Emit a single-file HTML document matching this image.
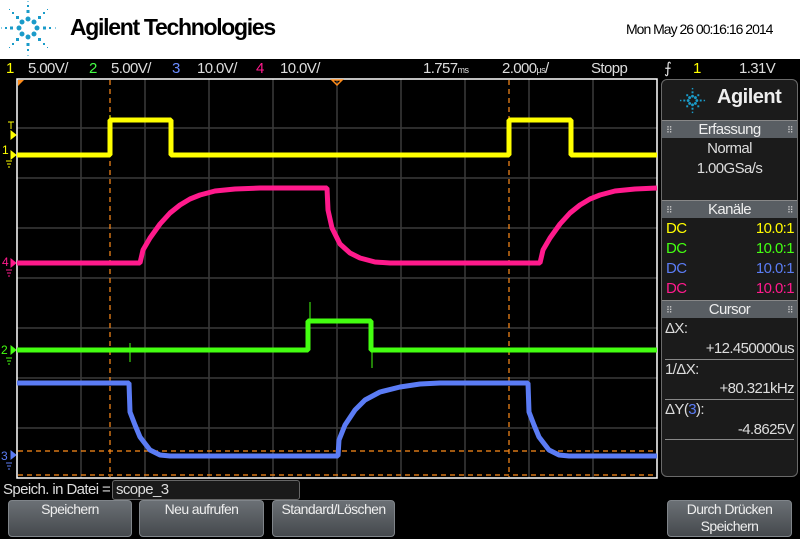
<!DOCTYPE html>
<html><head><meta charset="utf-8"><style>
*{margin:0;padding:0;box-sizing:border-box}
body{width:800px;height:539px;background:#000;position:relative;overflow:hidden;font-family:"Liberation Sans Narrow","Liberation Sans",sans-serif;color:#ddd;letter-spacing:-0.6px}
.a{position:absolute;white-space:nowrap}
#hdr{position:absolute;left:0;top:0;width:800px;height:59px;background:#fff}
.bar{font-size:15px;top:59px;line-height:19px}
.pnl{position:absolute;left:661px;top:79px;width:137px;height:398px;background:#1b1b1b;border:1px solid #6a6a6a;border-radius:6px}
.ph{position:absolute;left:0;width:135px;height:18px;background:#595e63;color:#eee;text-align:center;font-size:15px;line-height:18px;border-top:1px solid #888}
.ph:before{content:"⠿";position:absolute;left:4px;font-size:9px;color:#ccc}
.ph:after{content:"⠿";position:absolute;right:4px;font-size:9px;color:#ccc}
.btn{position:absolute;top:500px;height:37px;background:linear-gradient(#6b7075,#45494d);border:1px solid #80858a;border-radius:4px;color:#eee;font-size:14px;text-align:center;line-height:17px}
.arr{position:absolute;left:50%;bottom:3px;margin-left:-10px;width:0;height:0}
</style></head><body>
<div id="hdr"></div>
<svg class="a" style="left:0;top:0" width="58" height="58" viewBox="0 0 58 58">
<g fill="#1a9bc9">
<circle cx="28" cy="19" r="2.5"/><circle cx="28" cy="37" r="2.5"/><circle cx="19" cy="28" r="2.5"/><circle cx="37" cy="28" r="2.5"/>
<circle cx="22" cy="22" r="2.5"/><circle cx="34" cy="22" r="2.5"/><circle cx="22" cy="34" r="2.5"/><circle cx="34" cy="34" r="2.5"/>
<rect x="26.5" y="10" width="3" height="3"/><rect x="26.5" y="43" width="3" height="3"/><rect x="10" y="26.5" width="3" height="3"/><rect x="43" y="26.5" width="3" height="3"/>
<rect x="16" y="16" width="3" height="3"/><rect x="38" y="16" width="3" height="3"/><rect x="16" y="38" width="3" height="3"/><rect x="38" y="38" width="3" height="3"/>
<rect x="27" y="5" width="2" height="2"/><rect x="27" y="49" width="2" height="2"/><rect x="5" y="27" width="2" height="2"/><rect x="49" y="27" width="2" height="2"/>
<rect x="12" y="12" width="2" height="2"/><rect x="43" y="12" width="2" height="2"/><rect x="12" y="43" width="2" height="2"/><rect x="43" y="43" width="2" height="2"/>
<rect x="27.5" y="1" width="1" height="1"/><rect x="27.5" y="55" width="1" height="1"/><rect x="1" y="27.5" width="1" height="1"/><rect x="55" y="27.5" width="1" height="1"/>
<rect x="9" y="9" width="1" height="1"/><rect x="47" y="9" width="1" height="1"/><rect x="9" y="47" width="1" height="1"/><rect x="47" y="47" width="1" height="1"/>
</g></svg>
<div class="a" style="left:70px;top:14px;font-family:'Liberation Sans',sans-serif;font-weight:bold;font-size:23px;color:#000;letter-spacing:-1.3px">Agilent Technologies</div>
<div class="a" style="left:626px;top:21px;font-size:14px;color:#000;letter-spacing:-1px">Mon May 26 00:16:16 2014</div>
<div class="a bar" style="left:6px;color:#ff0">1</div>
<div class="a bar" style="left:28px">5.00V/</div>
<div class="a bar" style="left:89px;color:#4f4">2</div>
<div class="a bar" style="left:111px">5.00V/</div>
<div class="a bar" style="left:172px;color:#6b8cff">3</div>
<div class="a bar" style="left:197px">10.0V/</div>
<div class="a bar" style="left:256px;color:#ff1a8c">4</div>
<div class="a bar" style="left:280px">10.0V/</div>
<div class="a bar" style="left:423px">1.757<span style="font-size:9px">ms</span></div>
<div class="a bar" style="left:502px">2.000<span style="font-size:9px">µs</span>/</div>
<div class="a bar" style="left:591px">Stopp</div>
<div class="a bar" style="left:664px">⨍</div>
<div class="a bar" style="left:693px;color:#ff0">1</div>
<div class="a bar" style="left:739px">1.31V</div>
<svg class="a" style="left:0;top:78px" width="660" height="402" viewBox="0 78 660 402">
<g stroke="#3a3a3a" stroke-width="1.5">
<line x1="81" y1="79" x2="81" y2="478"/><line x1="145" y1="79" x2="145" y2="478"/><line x1="209" y1="79" x2="209" y2="478"/><line x1="273" y1="79" x2="273" y2="478"/><line x1="337" y1="79" x2="337" y2="478"/><line x1="401" y1="79" x2="401" y2="478"/><line x1="465" y1="79" x2="465" y2="478"/><line x1="529" y1="79" x2="529" y2="478"/><line x1="593" y1="79" x2="593" y2="478"/>
<line x1="17" y1="128" x2="657" y2="128"/><line x1="17" y1="178" x2="657" y2="178"/><line x1="17" y1="228" x2="657" y2="228"/><line x1="17" y1="278" x2="657" y2="278"/><line x1="17" y1="328" x2="657" y2="328"/><line x1="17" y1="378" x2="657" y2="378"/><line x1="17" y1="428" x2="657" y2="428"/>
</g>
<path d="M17 79H657V478H17Z" fill="none" stroke="#fff" stroke-width="1.5"/>
<g stroke="#ff8c1a" stroke-width="1.2" stroke-dasharray="5,4">
<line x1="110" y1="80" x2="110" y2="477"/><line x1="509" y1="80" x2="509" y2="477"/>
<line x1="18" y1="451" x2="656" y2="451"/><line x1="18" y1="475" x2="656" y2="475"/>
</g>
<path d="M18 80h6l-6 6z" fill="#ff8c1a"/><path d="M332 80h10l-5 5z" fill="none" stroke="#ff8c1a" stroke-width="1.5"/>
<g fill="none" stroke-width="5" stroke-linejoin="bevel">
<polyline stroke="#ff0" points="17,155 110,155 110,120 171,120 171,155 509,155 509,120 571,120 571,155 657,155"/>
<polyline stroke="#ff1a8c" points="17,263 140,263 143,250 150,238 160,224 170,213 180,205 190,199 200,195 215,191 235,189 260,188 327,188 328,210 332,228 340,244 350,253 360,258 375,262 390,263 540,263 543,250 550,238 560,224 570,213 580,205 590,199 600,195 615,191 635,189 657,188"/>
<polyline stroke="#4f1" points="17,350 308,350 308,321 371,321 371,350 657,350"/>
<polyline stroke="#5b7cf5" points="17,383 129,383 130,412 135,425 140,437 150,450 160,455 170,456 338,456 339,440 345,425 355,410 365,400 380,392 400,387 420,384 440,383 528,383 529,412 534,425 539,437 549,450 559,455 569,456 657,456"/>
</g>
<g stroke-width="1">
<line x1="110" y1="115" x2="110" y2="125" stroke="#ff0"/><line x1="310" y1="302" x2="310" y2="325" stroke="#4f1"/><line x1="372" y1="340" x2="372" y2="368" stroke="#4f1"/><line x1="130" y1="343" x2="130" y2="362" stroke="#4f1"/>
</g>
</svg>
<div class="a" style="left:2px;top:143px;font-size:12px;color:#ff0">1</div>
<div class="a" style="left:2px;top:255px;font-size:12px;color:#ff1a8c">4</div>
<div class="a" style="left:1px;top:343px;font-size:12px;color:#4f1">2</div>
<div class="a" style="left:1px;top:449px;font-size:12px;color:#5b7cf5">3</div>
<svg class="a" style="left:0;top:118px" width="17" height="360">
<g fill="#ff0" stroke="#ff0"><path d="M8 4h6M11 4v7" fill="none"/><path d="M11 13l5 4-5 4z"/><path d="M11 33l5 4-5 4z"/><path d="M6 43h6M7 46h4M8 49h2" fill="none"/></g>
<g fill="#ff1a8c" stroke="#ff1a8c"><path d="M11 141l5 4-5 4z"/><path d="M6 152h6M7 155h4M8 158h2" fill="none"/></g>
<g fill="#4f1" stroke="#4f1"><path d="M11 228l5 4-5 4z"/><path d="M6 240h6M7 243h4M8 246h2" fill="none"/></g>
<g fill="#5b7cf5" stroke="#5b7cf5"><path d="M11 333l5 4-5 4z"/><path d="M6 345h6M7 348h4M8 351h2" fill="none"/></g>
</svg>
<div class="pnl">
<svg class="a" style="left:17px;top:7px" width="28" height="28" viewBox="0 0 58 58"><g fill="#1a9bc9">
<circle cx="28" cy="19" r="3"/><circle cx="28" cy="37" r="3"/><circle cx="19" cy="28" r="3"/><circle cx="37" cy="28" r="3"/><circle cx="22" cy="22" r="3"/><circle cx="34" cy="22" r="3"/><circle cx="22" cy="34" r="3"/><circle cx="34" cy="34" r="3"/>
<rect x="26" y="9" width="4" height="4"/><rect x="26" y="43" width="4" height="4"/><rect x="9" y="26" width="4" height="4"/><rect x="43" y="26" width="4" height="4"/><rect x="15" y="15" width="4" height="4"/><rect x="38" y="15" width="4" height="4"/><rect x="15" y="38" width="4" height="4"/><rect x="38" y="38" width="4" height="4"/>
<rect x="26.5" y="2" width="3" height="3"/><rect x="26.5" y="51" width="3" height="3"/><rect x="2" y="26.5" width="3" height="3"/><rect x="51" y="26.5" width="3" height="3"/></g></svg>
<div class="a" style="left:55px;top:6px;font-family:'Liberation Sans',sans-serif;font-weight:bold;font-size:20px;color:#eee;letter-spacing:-0.5px">Agilent</div>
<div class="ph" style="top:40px">Erfassung</div>
<div class="a" style="left:0;width:135px;text-align:center;top:60px;font-size:15px">Normal</div>
<div class="a" style="left:0;width:135px;text-align:center;top:80px;font-size:15px">1.00GSa/s</div>
<div class="ph" style="top:120px">Kanäle</div>
<div class="a" style="left:4px;top:140px;font-size:15px;color:#ff0">DC</div><div class="a" style="right:3px;top:140px;font-size:15px;color:#ff0">10.0:1</div>
<div class="a" style="left:4px;top:160px;font-size:15px;color:#4f1">DC</div><div class="a" style="right:3px;top:160px;font-size:15px;color:#4f1">10.0:1</div>
<div class="a" style="left:4px;top:180px;font-size:15px;color:#5b7cf5">DC</div><div class="a" style="right:3px;top:180px;font-size:15px;color:#5b7cf5">10.0:1</div>
<div class="a" style="left:4px;top:200px;font-size:15px;color:#ff1a8c">DC</div><div class="a" style="right:3px;top:200px;font-size:15px;color:#ff1a8c">10.0:1</div>
<div class="ph" style="top:220px">Cursor</div>
<div class="a" style="left:3px;top:240px;font-size:15px">ΔX:</div>
<div class="a" style="right:3px;top:260px;font-size:15px">+12.450000us</div>
<div style="position:absolute;left:3px;top:279px;width:129px;height:1px;background:#888"></div>
<div class="a" style="left:3px;top:281px;font-size:15px">1/ΔX:</div>
<div class="a" style="right:3px;top:300px;font-size:15px">+80.321kHz</div>
<div style="position:absolute;left:3px;top:319px;width:129px;height:1px;background:#888"></div>
<div class="a" style="left:3px;top:321px;font-size:15px">ΔY(<span style="color:#5b7cf5">3</span>):</div>
<div class="a" style="right:3px;top:341px;font-size:15px">-4.8625V</div>
<div style="position:absolute;left:3px;top:359px;width:129px;height:1px;background:#888"></div>
</div>
<div class="a" style="left:3px;top:481px;font-size:15px">Speich. in Datei =</div>
<div class="a" style="left:112px;top:480px;width:188px;height:20px;border:1px solid #666;border-radius:3px;background:#1a1a1a;font-size:15px;padding-left:3px;line-height:18px">scope_3</div>
<div class="btn" style="left:8px;width:124px">Speichern<svg class="arr" width="20" height="12" viewBox="0 0 20 12"><path d="M6 0h8v5h6l-10 7-10-7h6z" fill="#fff"/></svg></div>
<div class="btn" style="left:139px;width:125px">Neu aufrufen<svg class="arr" width="20" height="12" viewBox="0 0 20 12"><path d="M6 0h8v5h6l-10 7-10-7h6z" fill="#fff"/></svg></div>
<div class="btn" style="left:272px;width:123px">Standard/Löschen<svg class="arr" width="20" height="12" viewBox="0 0 20 12"><path d="M6 0h8v5h6l-10 7-10-7h6z" fill="#fff"/></svg></div>
<div class="btn" style="left:667px;width:125px">Durch Drücken<br>Speichern</div>
</body></html>
